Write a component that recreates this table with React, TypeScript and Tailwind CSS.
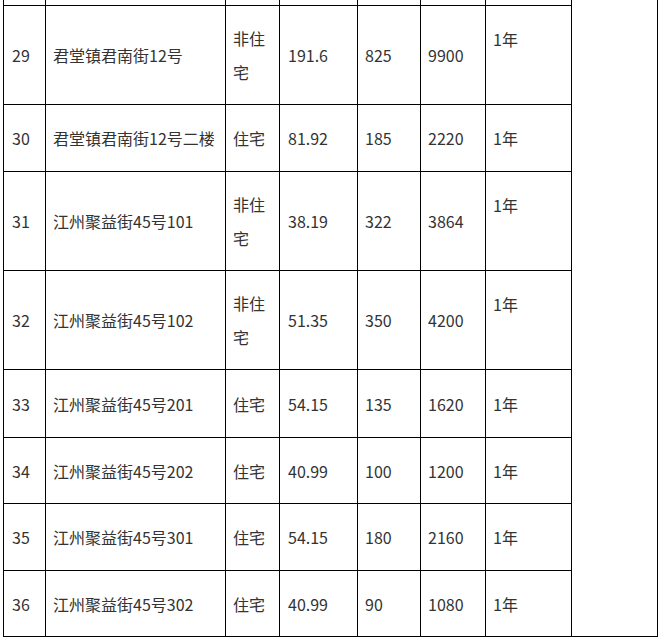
const rows = [
  { no: "29", addr: "君堂镇君南街12号", kind: "非住宅", area: "191.6", month: "825", year: "9900", term: "1年", tall: true },
  { no: "30", addr: "君堂镇君南街12号二楼", kind: "住宅", area: "81.92", month: "185", year: "2220", term: "1年", tall: false },
  { no: "31", addr: "江州聚益街45号101", kind: "非住宅", area: "38.19", month: "322", year: "3864", term: "1年", tall: true },
  { no: "32", addr: "江州聚益街45号102", kind: "非住宅", area: "51.35", month: "350", year: "4200", term: "1年", tall: true },
  { no: "33", addr: "江州聚益街45号201", kind: "住宅", area: "54.15", month: "135", year: "1620", term: "1年", tall: false },
  { no: "34", addr: "江州聚益街45号202", kind: "住宅", area: "40.99", month: "100", year: "1200", term: "1年", tall: false },
  { no: "35", addr: "江州聚益街45号301", kind: "住宅", area: "54.15", month: "180", year: "2160", term: "1年", tall: false },
  { no: "36", addr: "江州聚益街45号302", kind: "住宅", area: "40.99", month: "90", year: "1080", term: "1年", tall: false },
]

const cell = "flex items-center border-r border-b border-black px-[7px]"

export default function App() {
  return (
    <div
      className="min-h-screen bg-white pl-[3px] text-[16px] leading-[34px] text-[#333]"
      style={{ fontFamily: '"Noto Sans CJK SC", "Microsoft YaHei", sans-serif' }}
    >
      <div className="grid w-[655px] grid-cols-[42px_180px_54px_78px_63px_65px_86px_86px] grid-rows-[6px_99px_67px_99px_99px_68px_66px_67px_66px] border-l border-black">
        {/* tail of the row above */}
        {[0, 1, 2, 3, 4, 5, 6].map((i) => (
          <div key={i} className="border-r border-b border-black" />
        ))}
        <div className="col-start-8 row-span-9 row-start-1 border-r border-b border-black" />

        {rows.map((r) => (
          <div key={r.no} className="contents">
            <div className={`${cell} pl-[8px]`}>{r.no}</div>
            <div className={cell}>{r.addr}</div>
            <div className={`${cell} px-[6px]`}>{r.kind}</div>
            <div className={`${cell} pl-[8px]`}>{r.area}</div>
            <div className={`${cell} px-[6px]`}>{r.month}</div>
            <div className={cell}>{r.year}</div>
            {r.tall ? (
              <div className="flex items-start border-r border-b border-black px-[7px] pt-[16px]">{r.term}</div>
            ) : (
              <div className={cell}>{r.term}</div>
            )}
          </div>
        ))}
      </div>
    </div>
  )
}
